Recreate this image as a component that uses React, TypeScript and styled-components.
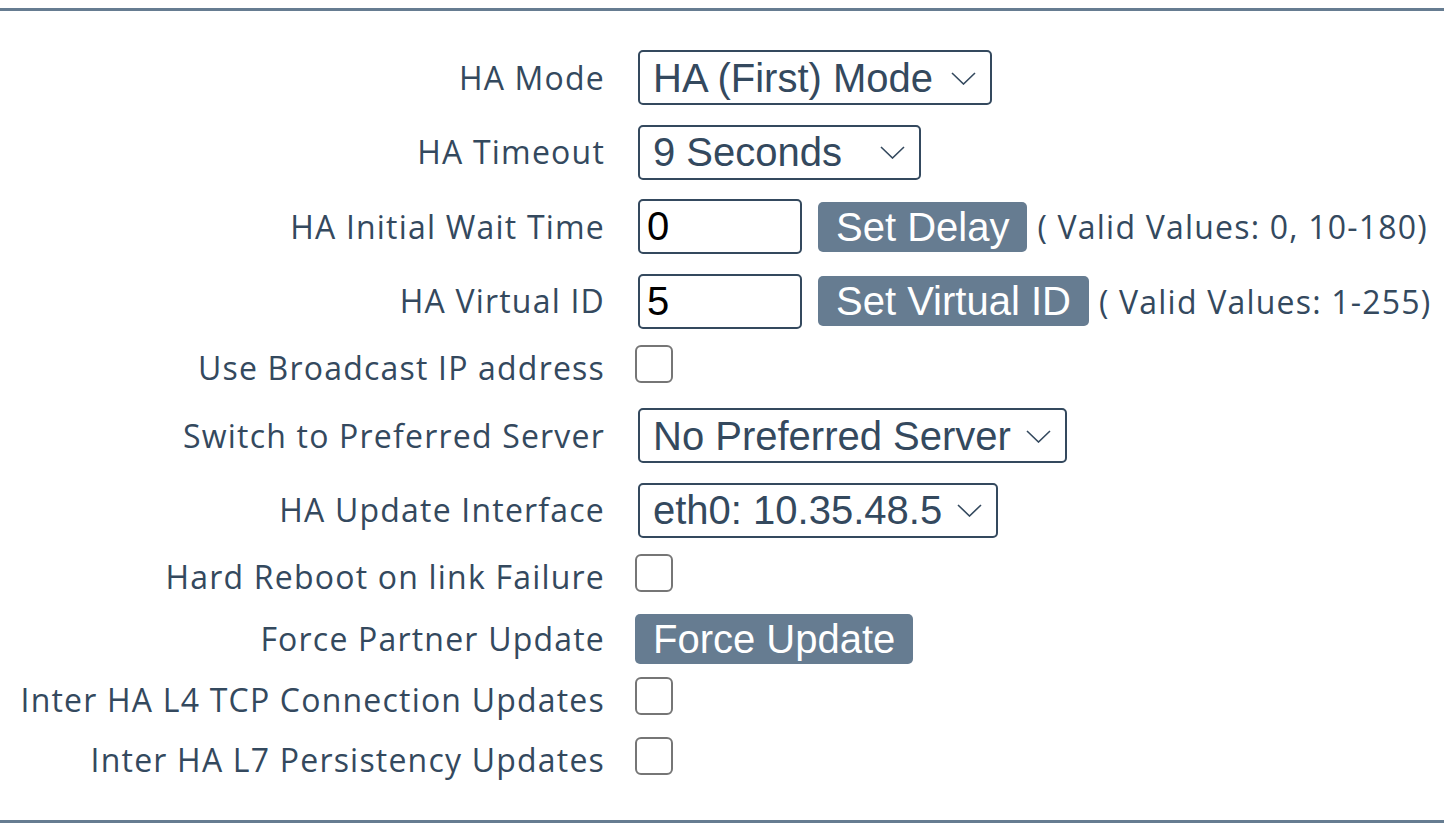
import React from "react";
import styled, { createGlobalStyle } from "styled-components";

const GlobalStyle = createGlobalStyle`
  html, body { margin: 0; padding: 0; background: #ffffff; }
  body { font-family: "Open Sans", "Noto Sans", sans-serif; }
  * { box-sizing: border-box; }
`;

const Page = styled.div`
  padding-top: 8px;
  width: 1444px;
  height: 834px;
  overflow: hidden;
`;

const Panel = styled.div`
  border-top: 3px solid #667c91;
  border-bottom: 3px solid #667c91;
  padding: 29px 0 30px 0;
`;

const Row = styled.div<{ $h: number }>`
  display: grid;
  grid-template-columns: 604px 1fr;
  column-gap: 31px;
  align-items: center;
  height: ${(p) => p.$h}px;
`;

const Label = styled.label`
  text-align: right;
  font-family: "Open Sans", "Noto Sans", sans-serif;
  font-size: 32px;
  letter-spacing: 1.2px;
  line-height: 40px;
  color: #34495e;
  white-space: nowrap;
  margin-right: -1px;
`;

const Cell = styled.div`
  display: flex;
  align-items: center;
`;

const SelectWrap = styled.div<{ $w: number }>`
  position: relative;
  margin-left: 3px;
  width: ${(p) => p.$w}px;
  height: 55px;
`;

const Select = styled.select`
  appearance: none;
  -webkit-appearance: none;
  width: 100%;
  height: 100%;
  border: 2px solid #34495e;
  border-radius: 5px;
  background: #ffffff;
  color: #34495e;
  font-family: "Liberation Sans", Arial, sans-serif;
  font-size: 40px;
  padding: 0 0 0 13px;
  outline: none;
`;

const Chevron = styled.svg`
  position: absolute;
  right: 16px;
  top: 50%;
  width: 25px;
  height: 13px;
  margin-top: -6px;
  pointer-events: none;
`;

const TextInput = styled.input`
  margin-left: 3px;
  width: 164px;
  height: 55px;
  border: 2px solid #34495e;
  border-radius: 5px;
  background: #ffffff;
  color: #000000;
  font-family: "Liberation Sans", Arial, sans-serif;
  font-size: 40px;
  padding: 0 0 0 7px;
  outline: none;
`;

const Button = styled.button<{ $ml: number }>`
  margin-left: ${(p) => p.$ml}px;
  height: 50px;
  padding: 0 18px;
  border: none;
  border-radius: 5px;
  background: #667c91;
  color: #ffffff;
  font-family: "Liberation Sans", Arial, sans-serif;
  font-size: 40px;
  line-height: 50px;
  cursor: pointer;
`;

const Hint = styled.span`
  margin-left: 10px;
  font-family: "Open Sans", "Noto Sans", sans-serif;
  font-size: 32px;
  letter-spacing: 1.2px;
  color: #34495e;
  white-space: nowrap;
`;

const Checkbox = styled.input.attrs({ type: "checkbox" })`
  appearance: none;
  -webkit-appearance: none;
  margin: 0 0 8px 0;
  width: 38px;
  height: 38px;
  border: 2px solid #767676;
  border-radius: 6px;
  background: #ffffff;
`;

const ChevronIcon = () => (
  <Chevron viewBox="0 0 25 13">
    <path d="M1 1 L12.5 12 L24 1" fill="none" stroke="#34495e" strokeWidth="1.6" />
  </Chevron>
);

const SelectBox = ({ w, value }: { w: number; value: string }) => (
  <SelectWrap $w={w}>
    <Select defaultValue={value}>
      <option>{value}</option>
    </Select>
    <ChevronIcon />
  </SelectWrap>
);

export default function App() {
  return (
    <>
      <GlobalStyle />
      <Page>
        <Panel>
          <Row $h={75}>
            <Label>HA Mode</Label>
            <Cell>
              <SelectBox w={354} value="HA (First) Mode" />
            </Cell>
          </Row>
          <Row $h={74}>
            <Label>HA Timeout</Label>
            <Cell>
              <SelectBox w={283} value="9 Seconds" />
            </Cell>
          </Row>
          <Row $h={75}>
            <Label>HA Initial Wait Time</Label>
            <Cell>
              <TextInput defaultValue="0" />
              <Button $ml={16}>Set Delay</Button>
              <Hint>( Valid Values: 0, 10-180)</Hint>
            </Cell>
          </Row>
          <Row $h={74}>
            <Label>HA Virtual ID</Label>
            <Cell>
              <TextInput defaultValue="5" />
              <Button $ml={16}>Set Virtual ID</Button>
              <Hint>( Valid Values: 1-255)</Hint>
            </Cell>
          </Row>
          <Row $h={60}>
            <Label>Use Broadcast IP address</Label>
            <Cell>
              <Checkbox />
            </Cell>
          </Row>
          <Row $h={75}>
            <Label>Switch to Preferred Server</Label>
            <Cell>
              <SelectBox w={429} value="No Preferred Server" />
            </Cell>
          </Row>
          <Row $h={74}>
            <Label>HA Update Interface</Label>
            <Cell>
              <SelectBox w={360} value="eth0: 10.35.48.5" />
            </Cell>
          </Row>
          <Row $h={60}>
            <Label>Hard Reboot on link Failure</Label>
            <Cell>
              <Checkbox />
            </Cell>
          </Row>
          <Row $h={63}>
            <Label>Force Partner Update</Label>
            <Cell>
              <Button $ml={0}>Force Update</Button>
            </Cell>
          </Row>
          <Row $h={60}>
            <Label>Inter HA L4 TCP Connection Updates</Label>
            <Cell>
              <Checkbox />
            </Cell>
          </Row>
          <Row $h={60}>
            <Label>Inter HA L7 Persistency Updates</Label>
            <Cell>
              <Checkbox />
            </Cell>
          </Row>
        </Panel>
      </Page>
    </>
  );
}
